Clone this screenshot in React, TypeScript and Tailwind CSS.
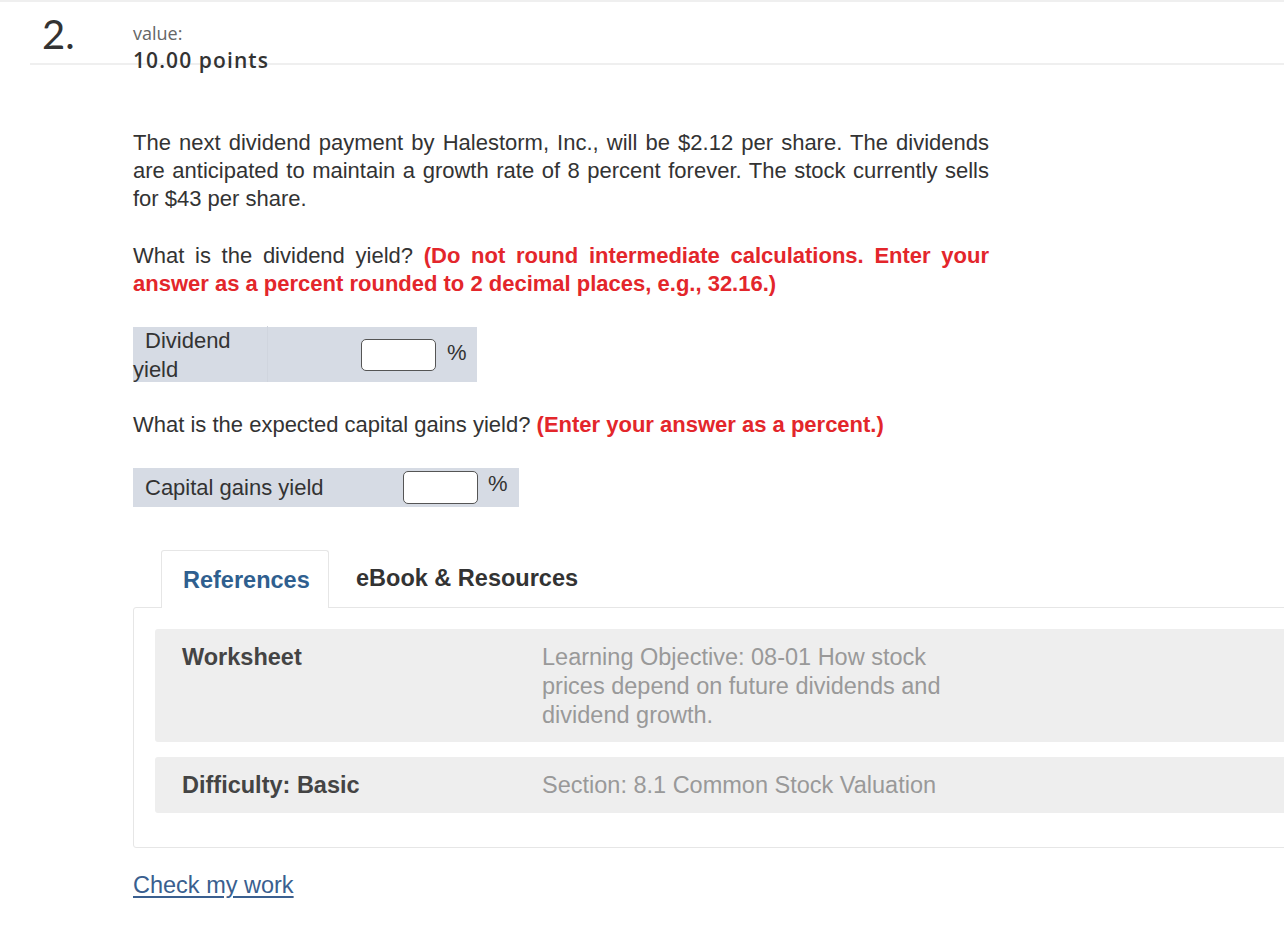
import React from 'react'

const sans = { fontFamily: '"Liberation Sans", Arial, sans-serif' }

// one justified line of the question text
const Line = ({ children }: { children: React.ReactNode }) => (
  <div className="whitespace-nowrap text-justify [text-align-last:justify]">{children}</div>
)

export default function App() {
  return (
    <div className="w-[1284px] min-h-[926px] overflow-hidden bg-white border-t-2 border-[#efefef]" style={sans}>
      {/* Header */}
      <div className="ml-[30px] h-[63px] border-b-2 border-[#efefef] flex items-start">
        <div className="w-[103px] pl-[12px] pt-[10px] text-[40px] leading-[44px] text-[#333]" style={{ fontFamily: 'Lato, "Open Sans", sans-serif' }}>
          2.
        </div>
        <div className="pt-[19px]" style={{ fontFamily: '"Open Sans", Lato, sans-serif' }}>
          <div className="text-[18px] leading-[24px] text-[#666]">value:</div>
          <div className="text-[21px] leading-[30px] font-semibold text-[#333] tracking-[1.1px]">10.00 points</div>
        </div>
      </div>

      <div className="pl-[133px] pt-[64px] text-[#333] text-[22px] leading-[28px]">
        <div className="w-[856px]">
          <Line>The next dividend payment by Halestorm, Inc., will be $2.12 per share. The dividends</Line>
          <Line>are anticipated to maintain a growth rate of 8 percent forever. The stock currently sells</Line>
          <div>for $43 per share.</div>
        </div>

        <div className="w-[856px] mt-[29px]">
          <Line>
            What is the dividend yield? <b className="text-[#e3262b]">(Do not round intermediate calculations. Enter your</b>
          </Line>
          <div className="font-bold text-[#e3262b]">answer as a percent rounded to 2 decimal places, e.g., 32.16.)</div>
        </div>

        {/* Dividend yield */}
        <div className="mt-[29px] flex w-[344px] h-[55px] bg-[#d6dbe4]">
          <div className="w-[135px] indent-[12px] leading-[29px] -mt-[1px] border-r border-[#d0d5de]">Dividend yield</div>
          <div className="flex items-center">
            <div className="ml-[93px] w-[75px] h-[32px] bg-white border border-[#555] rounded-[5px]" />
            <span className="ml-[11px] -mt-[4px]">%</span>
          </div>
        </div>

        <p className="mt-[29px]">
          What is the expected capital gains yield?{' '}
          <b className="text-[#e3262b]">(Enter your answer as a percent.)</b>
        </p>

        {/* Capital gains yield */}
        <div className="mt-[29px] flex items-center w-[386px] h-[39px] bg-[#d6dbe4]">
          <div className="w-[270px] pl-[12px]">Capital gains yield</div>
          <div className="w-[75px] h-[33px] bg-white border border-[#555] rounded-[5px]" />
          <span className="ml-[10px] -mt-[8px]">%</span>
        </div>

        {/* Tabs */}
        <div className="mt-[42px] flex items-end pl-[28px] text-[23.5px]">
          <div className="w-[168px] h-[58px] -mb-px bg-white border border-b-0 border-[#e6e6e6] rounded-t-[3px] flex items-center pl-[21px] font-bold text-[#2f5f8f] relative z-10">
            References
          </div>
          <div className="h-[58px] flex items-center pl-[27px] font-bold text-[#333]">eBook &amp; Resources</div>
        </div>
        <div className="w-[1250px] border border-[#e6e6e6] rounded-[3px] pt-[21px] pl-[21px] pb-[34px] text-[23.5px]">
          <div className="bg-[#eeeeee] rounded-[3px] h-[113px] flex pt-[14px] pl-[27px]">
            <div className="w-[360px] font-bold text-[#444]">Worksheet</div>
            <div className="w-[405px] text-[#999] leading-[29px]">
              Learning Objective: 08-01 How stock prices depend on future dividends and dividend growth.
            </div>
          </div>
          <div className="mt-[15px] bg-[#eeeeee] rounded-[3px] h-[56px] flex items-center pl-[27px]">
            <div className="w-[360px] font-bold text-[#444]">Difficulty: Basic</div>
            <div className="text-[#999]">Section: 8.1 Common Stock Valuation</div>
          </div>
        </div>

        <div className="mt-[23px] text-[23.5px]">
          <a href="#" className="text-[#3a5f8f] underline underline-offset-[3px]">Check my work</a>
        </div>
      </div>
    </div>
  )
}
